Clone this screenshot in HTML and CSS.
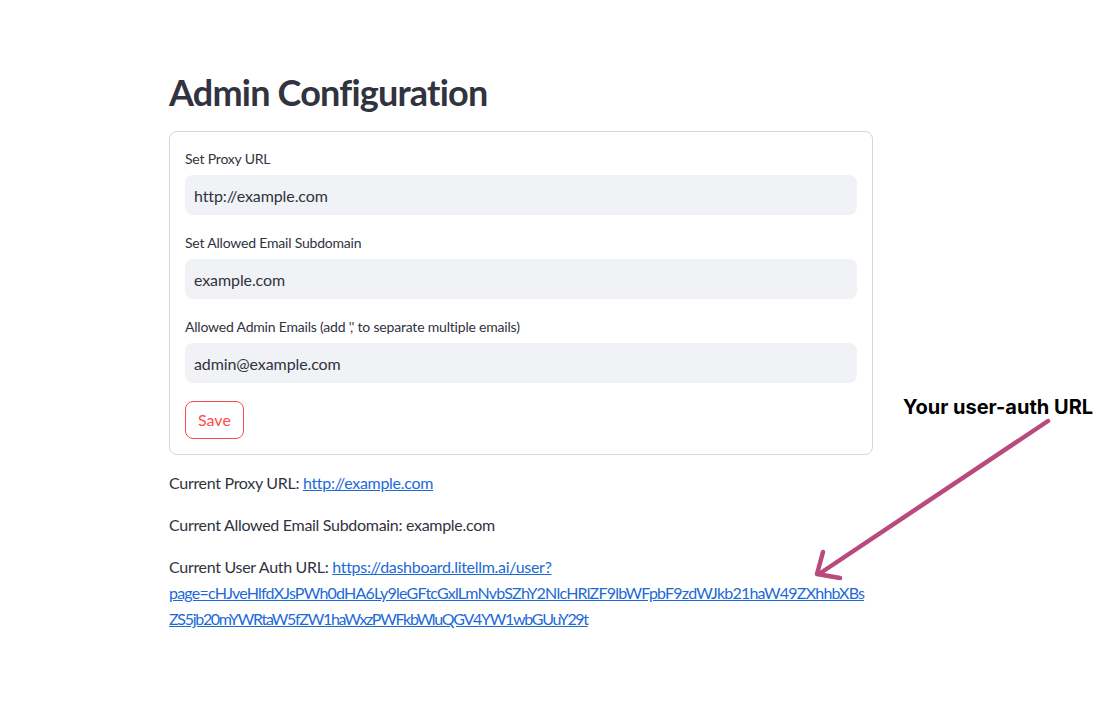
FILE: index.html
```html
<!DOCTYPE html>
<html lang="en">
<head>
<meta charset="utf-8">
<title>Admin Configuration</title>
<link rel="stylesheet" href="styles.css">
</head>
<body>
<main class="page">
  <h1 class="title">Admin Configuration</h1>
  <form class="card">
    <div class="field">
      <label class="label">Set Proxy URL</label>
      <div class="input">http://example.com</div>
    </div>
    <div class="field">
      <label class="label">Set Allowed Email Subdomain</label>
      <div class="input">example.com</div>
    </div>
    <div class="field">
      <label class="label">Allowed Admin Emails (add ',' to separate multiple emails)</label>
      <div class="input">admin@example.com</div>
    </div>
    <div class="actions">
      <button type="button" class="btn">Save</button>
    </div>
  </form>
  <div class="info">
    <p class="para">Current Proxy URL: <a class="link" href="#">http://example.com</a></p>
    <p class="para">Current Allowed Email Subdomain: example.com</p>
    <p class="para">Current User Auth URL: <a class="link" href="#">https://dashboard.litellm.ai/user?<br><span class="token token-a">page=cHJveHlfdXJsPWh0dHA6Ly9leGFtcGxlLmNvbSZhY2NlcHRlZF9lbWFpbF9zdWJkb21haW49ZXhhbXBs</span><br><span class="token token-b">ZS5jb20mYWRtaW5fZW1haWxzPWFkbWluQGV4YW1wbGUuY29t</span></a></p>
  </div>
</main>
<div class="annotation">
  <div class="annotation-label">Your user-auth URL</div>
  <svg class="annotation-arrow" width="1104" height="709" viewBox="0 0 1104 709" aria-hidden="true">
    <path d="M1048 421 L819 574" fill="none" stroke="#b84a7c" stroke-width="4.5" stroke-linecap="round"/>
    <path d="M823 552 L817 574 L840 578" fill="none" stroke="#b84a7c" stroke-width="4.5" stroke-linecap="round" stroke-linejoin="round"/>
  </svg>
</div>
</body>
</html>
```

FILE: styles.css
```css
html, body {
  margin: 0;
  padding: 0;
  background: #ffffff;
}

body {
  font-family: "Lato", "Liberation Sans", sans-serif;
  color: #31333f;
  width: 1104px;
  height: 709px;
  overflow: hidden;
  position: relative;
}

.page {
  width: 704px;
  margin-left: 169px;
  padding-top: 68px;
}

.title {
  margin: 0 0 15px 0;
  font-size: 36px;
  font-weight: 700;
  line-height: 48px;
  letter-spacing: -0.8px;
  color: #31333f;
}

.card {
  border: 1px solid #d6d6d9;
  border-radius: 8px;
  padding: 15px;
  display: flex;
  flex-direction: column;
  gap: 16px;
}

.field {
  display: flex;
  flex-direction: column;
}

.label {
  font-size: 14px;
  line-height: 24px;
  height: 24px;
  margin-bottom: 4px;
  letter-spacing: -0.2px;
  color: #31333f;
}

.input {
  height: 40px;
  box-sizing: border-box;
  background: #f0f2f6;
  border-radius: 8px;
  padding: 0 9px;
  display: flex;
  align-items: center;
  font-size: 16px;
  letter-spacing: -0.1px;
  color: #31333f;
}

.actions {
  display: flex;
  padding-top: 2px;
}

.btn {
  font-family: inherit;
  font-size: 16px;
  color: #ff4b4b;
  background: #ffffff;
  border: 1px solid #ff4b4b;
  border-radius: 8px;
  height: 38px;
  padding: 0 12px;
  line-height: 1;
}

.info {
  padding-top: 15px;
}

.para {
  margin: 0 0 16px 0;
  font-size: 16px;
  line-height: 26px;
  letter-spacing: -0.3px;
}

.link {
  color: #1c6ad6;
  text-decoration: underline;
}

.token {
  white-space: nowrap;
}

.token-a {
  letter-spacing: -0.78px;
}

.token-b {
  letter-spacing: -1.3px;
}

.annotation {
  position: absolute;
  inset: 0;
  pointer-events: none;
}

.annotation-label {
  position: absolute;
  left: 903px;
  top: 395px;
  font-family: "Inter", sans-serif;
  font-weight: 700;
  font-size: 20px;
  line-height: 24px;
  color: #000000;
  white-space: nowrap;
}

.annotation-arrow {
  position: absolute;
  left: 0;
  top: 0;
}
```
